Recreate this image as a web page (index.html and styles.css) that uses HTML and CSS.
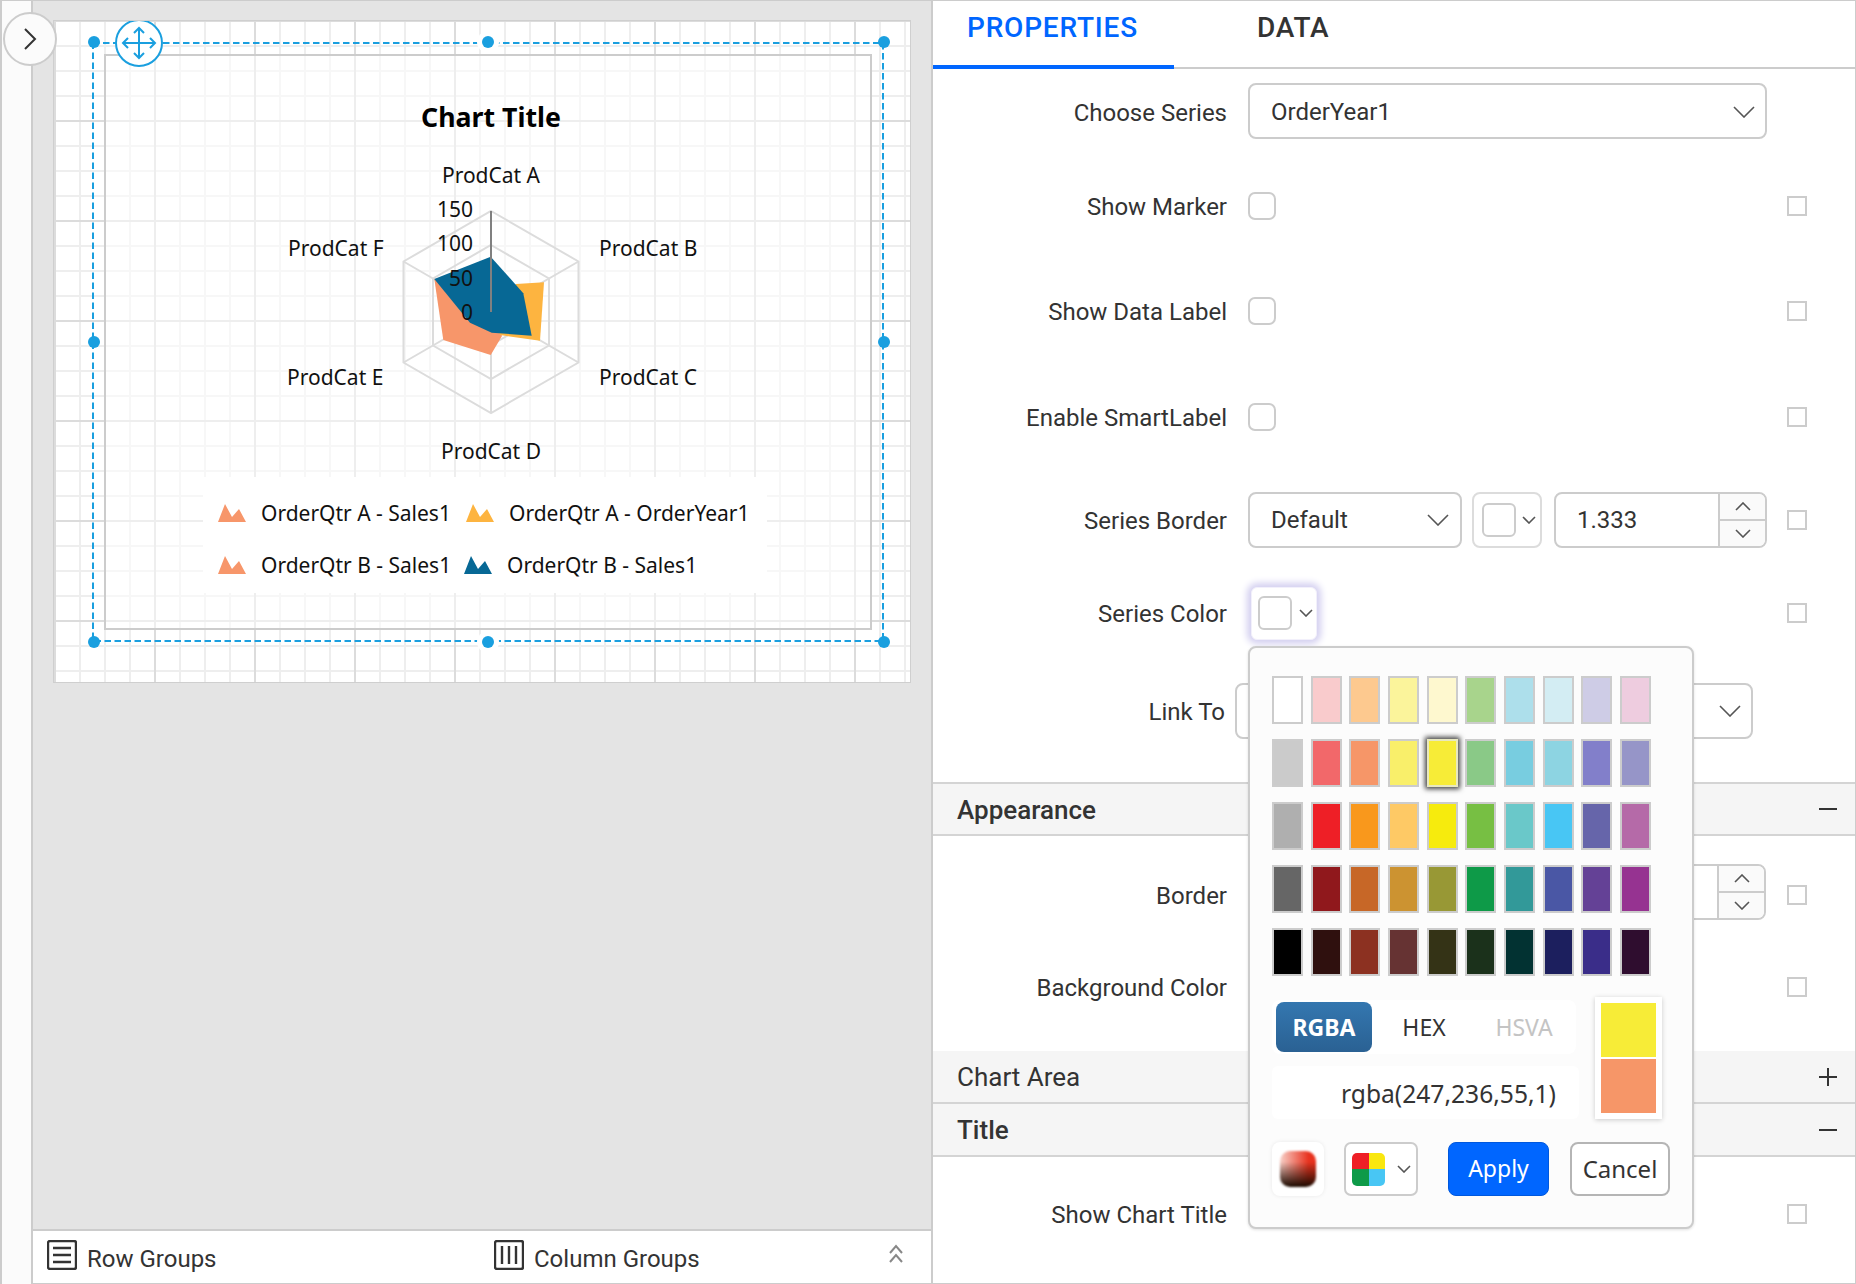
FILE: index.html
```html
<!DOCTYPE html>
<html lang="en">
<head>
<meta charset="utf-8">
<title>Report designer</title>
<link rel="stylesheet" href="styles.css">
</head>
<body>
<div class="app">
  <aside class="rail"></aside>
  <button class="collapse"><svg width="14" height="22" viewBox="0 0 14 22"><polyline points="2,1 12,11 2,21" class="chev-dark"/></svg></button>
  <main class="center">
    <div class="canvas">
      <div class="surface">
        <svg class="chart" viewBox="54 21 856 661" width="856" height="661">
          <rect class="frame" x="105" y="55" width="766" height="574"/>
          <rect class="legend-bg" x="203" y="477" width="564" height="116"/>
          <text class="ct-title" x="491" y="127" text-anchor="middle">Chart Title</text>
          <g class="grid-lines">
            <polygon points="491,211 578.5,261.5 578.5,362.5 491,413 403.5,362.5 403.5,261.5"/>
            <polygon points="491,245 549,278.5 549,345.5 491,379 433,345.5 433,278.5"/>
            <polygon points="491,279 520,295.5 520,328.5 491,345 462,328.5 462,295.5"/>
            <path d="M491 312V413M491 312L578.5 362.5M491 312L403.5 362.5M491 312L578.5 261.5M491 312L403.5 261.5"/>
          </g>
          <polygon class="s-orange" points="434.3,279 443.3,340 490.7,355 502,336 491,312"/>
          <polygon class="s-yellow" points="516,284 544,282.3 540,340.7 500,335 491,312"/>
          <polygon class="s-blue" points="490.7,256.7 523.3,293.3 531.7,335.7 491.7,332.7 470,322.7 434.3,279"/>
          <line class="axis" x1="491" y1="211" x2="491" y2="312"/>
          <g class="ct-label" text-anchor="end">
            <text x="473" y="217">150</text>
            <text x="473" y="251">100</text>
            <text x="473" y="286">50</text>
            <text x="473" y="320">0</text>
          </g>
          <g class="ct-label" text-anchor="middle">
            <text x="491" y="183">ProdCat A</text>
            <text x="491" y="459">ProdCat D</text>
          </g>
          <g class="ct-label">
            <text x="288" y="256">ProdCat F</text>
            <text x="599" y="256">ProdCat B</text>
            <text x="287" y="385">ProdCat E</text>
            <text x="599" y="385">ProdCat C</text>
            <text x="261" y="521">OrderQtr A - Sales1</text>
            <text x="509" y="521">OrderQtr A - OrderYear1</text>
            <text x="261" y="573">OrderQtr B - Sales1</text>
            <text x="507" y="573">OrderQtr B - Sales1</text>
          </g>
          <path class="s-orange" d="M218 522L225 504L232 517L239 509L246 522Z"/>
          <path class="s-yellow" d="M466 522L473 504L480 517L487 509L494 522Z"/>
          <path class="s-orange" d="M218 574L225 556L232 569L239 561L246 574Z"/>
          <path class="s-blue" d="M464 574L471 556L478 569L485 561L492 574Z"/>
          <rect class="sel" x="93" y="43" width="790" height="598"/>
          <circle class="gap-ring" cx="488" cy="42" r="11"/>
          <circle class="gap-ring" cx="488" cy="642" r="11"/>
          <g class="handles">
            <circle cx="94" cy="42" r="6"/><circle cx="488" cy="42" r="6"/><circle cx="884" cy="42" r="6"/>
            <circle cx="94" cy="342" r="6"/><circle cx="884" cy="342" r="6"/>
            <circle cx="94" cy="642" r="6"/><circle cx="488" cy="642" r="6"/><circle cx="884" cy="642" r="6"/>
          </g>
          <circle class="move" cx="139" cy="43" r="23"/>
          <path class="move-arrows" d="M139 28V58M123 43H155M134 33L139 28L144 33M134 53L139 58L144 53M128 38L123 43L128 48M150 38L155 43L150 48"/>
        </svg>
      </div>
    </div>
    <footer class="groups">
      <div class="group group-row">
        <svg width="30" height="30" viewBox="0 0 30 30" class="g-icon"><rect x="1" y="1" width="28" height="28" rx="2"/><path d="M6 8H24M6 15H24M6 22H24"/></svg>
        <span>Row Groups</span>
      </div>
      <div class="group group-col">
        <svg width="30" height="30" viewBox="0 0 30 30" class="g-icon"><rect x="1" y="1" width="28" height="28" rx="2"/><path d="M8 6V24M15 6V24M22 6V24"/></svg>
        <span>Column Groups</span>
      </div>
      <svg class="dbl-up" width="16" height="20" viewBox="0 0 16 20"><path d="M2 9L8 2L14 9M2 18L8 11L14 18"/></svg>
    </footer>
  </main>

  <section class="panel">
    <nav class="tabs">
      <div class="tab tab-active">PROPERTIES</div>
      <div class="tab tab-plain">DATA</div>
    </nav>

    <div class="row r-choose">
      <label class="lbl">Choose Series</label>
      <div class="field f-full"><span>OrderYear1</span><svg class="chv" width="22" height="12" viewBox="0 0 22 12"><polyline points="1,1 11,11 21,1"/></svg></div>
    </div>
    <div class="row r-marker">
      <label class="lbl">Show Marker</label><span class="check"></span><span class="mark"></span>
    </div>
    <div class="row r-dlabel">
      <label class="lbl">Show Data Label</label><span class="check"></span><span class="mark"></span>
    </div>
    <div class="row r-smart">
      <label class="lbl">Enable SmartLabel</label><span class="check"></span><span class="mark"></span>
    </div>
    <div class="row r-border">
      <label class="lbl">Series Border</label>
      <div class="field f-style"><span>Default</span><svg class="chv" width="22" height="12" viewBox="0 0 22 12"><polyline points="1,1 11,11 21,1"/></svg></div>
      <div class="colorbtn"><span class="swatch"></span><svg class="chv" width="14" height="8" viewBox="0 0 14 8"><polyline points="1,1 7,7 13,1"/></svg></div>
      <div class="number"><span class="num-val">1.333</span>
        <div class="spin"><div class="spin-b"><svg class="chv" width="16" height="9" viewBox="0 0 16 9"><polyline points="1,8 8,1 15,8"/></svg></div><div class="spin-b"><svg class="chv" width="16" height="9" viewBox="0 0 16 9"><polyline points="1,1 8,8 15,1"/></svg></div></div>
      </div>
      <span class="mark"></span>
    </div>
    <div class="row r-color">
      <label class="lbl">Series Color</label>
      <div class="colorbtn colorbtn-open"><span class="swatch"></span><svg class="chv" width="14" height="8" viewBox="0 0 14 8"><polyline points="1,1 7,7 13,1"/></svg></div>
      <span class="mark"></span>
    </div>
    <div class="row r-link">
      <label class="lbl lbl-link">Link To</label>
      <div class="field f-link"><svg class="chv" width="22" height="12" viewBox="0 0 22 12"><polyline points="1,1 11,11 21,1"/></svg></div>
    </div>

    <div class="sec"><span class="sec-strong">Appearance</span><svg class="pm" width="18" height="18" viewBox="0 0 18 18"><path d="M0 9H18"/></svg></div>
    <div class="row r-bd">
      <label class="lbl">Border</label>
      <div class="number n-hidden"><div class="spin"><div class="spin-b"><svg class="chv" width="16" height="9" viewBox="0 0 16 9"><polyline points="1,8 8,1 15,8"/></svg></div><div class="spin-b"><svg class="chv" width="16" height="9" viewBox="0 0 16 9"><polyline points="1,1 8,8 15,1"/></svg></div></div></div>
      <span class="mark"></span>
    </div>
    <div class="row r-bg">
      <label class="lbl">Background Color</label><span class="mark"></span>
    </div>
    <div class="sec sec-next"><span>Chart Area</span><svg class="pm" width="18" height="18" viewBox="0 0 18 18"><path d="M0 9H18M9 0V18"/></svg></div>
    <div class="sec sec-next"><span class="sec-strong">Title</span><svg class="pm" width="18" height="18" viewBox="0 0 18 18"><path d="M0 9H18"/></svg></div>
    <div class="row r-title">
      <label class="lbl">Show Chart Title</label><span class="mark"></span>
    </div>
  </section>

  <div class="popup">
    <div class="palette">
      <i class="c c-fff"></i><i class="c c11"></i><i class="c c12"></i><i class="c c13"></i><i class="c c14"></i><i class="c c15"></i><i class="c c16"></i><i class="c c17"></i><i class="c c18"></i><i class="c c19"></i>
      <i class="c c20"></i><i class="c c21"></i><i class="c c22"></i><i class="c c23"></i><i class="c c24"></i><i class="c c25"></i><i class="c c26"></i><i class="c c27"></i><i class="c c28"></i><i class="c c29"></i>
      <i class="c c30"></i><i class="c c31"></i><i class="c c32"></i><i class="c c33"></i><i class="c c34"></i><i class="c c35"></i><i class="c c36"></i><i class="c c37"></i><i class="c c38"></i><i class="c c39"></i>
      <i class="c c40"></i><i class="c c41"></i><i class="c c42"></i><i class="c c43"></i><i class="c c44"></i><i class="c c45"></i><i class="c c46"></i><i class="c c47"></i><i class="c c48"></i><i class="c c49"></i>
      <i class="c c50"></i><i class="c c51"></i><i class="c c52"></i><i class="c c53"></i><i class="c c54"></i><i class="c c55"></i><i class="c c56"></i><i class="c c57"></i><i class="c c58"></i><i class="c c59"></i>
    </div>
    <div class="mid">
      <div class="mid-left">
        <div class="fmt"><span class="fmt-on">RGBA</span><span class="fmt-hex">HEX</span><span class="fmt-off">HSVA</span></div>
        <div class="val">rgba(247,236,55,1)</div>
      </div>
      <div class="preview"><div class="pv-new"></div><div class="pv-old"></div></div>
    </div>
    <div class="actions">
      <div class="grad-btn"><span class="grad"></span></div>
      <div class="pal-btn"><span class="quad"><i class="q1"></i><i class="q2"></i><i class="q3"></i><i class="q4"></i></span><svg class="chv" width="14" height="8" viewBox="0 0 14 8"><polyline points="1,1 7,7 13,1"/></svg></div>
      <button class="apply">Apply</button>
      <button class="cancel">Cancel</button>
    </div>
  </div>
</div>
</body>
</html>
```
FILE: styles.css
```css
* { box-sizing: border-box; }
html, body { margin: 0; padding: 0; }
body { font-family: Roboto, "Liberation Sans", sans-serif; color: #333; background: #fff; }
.app { position: relative; display: flex; width: 1856px; height: 1284px; overflow: hidden; }

.rail { width: 33px; flex: none; background: #fbfbfb; border-left: 2px solid #ccc; border-right: 2px solid #ccc; border-top: 1px solid #ccc; }
.collapse { position: absolute; left: 3px; top: 12px; width: 54px; height: 54px; border-radius: 50%; border: 2px solid #ccc; background: #fbfbfb; display: flex; align-items: center; justify-content: center; padding: 0; z-index: 3; }
.chev-dark { fill: none; stroke: #333; stroke-width: 2; }

.center { width: 898px; flex: none; display: flex; flex-direction: column; }
.canvas { flex: 1; background: #e4e4e4; padding: 20px 20px 0 20px; border-top: 1px solid #ccc; }
.surface {
  width: 858px; height: 663px; margin-top: -1px; border: 1px solid #cfcfcf; background-color: #fff;
  background-image:
    linear-gradient(to right, #dcdcdc 2px, transparent 2px),
    linear-gradient(to bottom, #dcdcdc 2px, transparent 2px),
    linear-gradient(to right, #eeeeee 2px, transparent 2px),
    linear-gradient(to bottom, #eeeeee 2px, transparent 2px);
  background-size: 100px 100%, 100% 100px, 25px 100%, 100% 25px;
  background-position: 0 0, 0 99px, 0 0, 0 24px;
}
.chart { display: block; }
.frame { fill: rgba(255,255,255,.5); stroke: #ccc; stroke-width: 2; }
.legend-bg { fill: #fff; }
.ct-title { font: 700 26.7px "Noto Sans", sans-serif; fill: #000; }
.ct-label { font: 400 21px "Noto Sans", sans-serif; fill: #111; }
.grid-lines { fill: none; stroke: #dcdcdc; stroke-width: 2; }
.s-orange { fill: #f7966a; }
.s-yellow { fill: #fdb440; }
.s-blue { fill: #076895; }
.axis { stroke: #808080; stroke-width: 2; }
.sel { fill: none; stroke: #1a9fdf; stroke-width: 2; stroke-dasharray: 6.5 3.5; }
.gap-ring { fill: #fff; }
.handles { fill: #1a9fdf; }
.move { fill: #fff; stroke: #1a9fdf; stroke-width: 2; }
.move-arrows { fill: none; stroke: #1a9fdf; stroke-width: 2; }

.groups { height: 55px; flex: none; display: flex; align-items: center; background: #fff; border-top: 2px solid #ccc; border-bottom: 1px solid #ccc; font-size: 24px; color: #333; }
.group { display: flex; align-items: center; gap: 10px; }
.group span { margin-top: 4px; }
.group-row { margin-left: 14px; width: 447px; }
.group-col { width: 394px; }
.g-icon { fill: none; stroke: #333; stroke-width: 2.4; margin-top: -4px; }
.dbl-up { fill: none; stroke: #888; stroke-width: 2; margin-top: -6px; }

.panel { width: 925px; flex: none; border-left: 2px solid #ccc; border-right: 1px solid #ccc; border-top: 1px solid #ccc; border-bottom: 1px solid #ccc; display: flex; flex-direction: column; }
.tabs { height: 68px; flex: none; display: flex; border-bottom: 2px solid #ccc; }
.tab { font-size: 28px; font-weight: 500; line-height: 54px; letter-spacing: .8px; }
.tab-active { width: 241px; height: 68px; padding-left: 34px; color: #0066ff; border-bottom: 4px solid #0066ff; }
.tab-plain { margin-left: 83px; color: #333; }

.row { display: flex; align-items: center; flex: none; font-size: 24px; }
.lbl { width: 294px; text-align: right; margin-right: 21px; padding-top: 2px; flex: none; color: #333; }
.r-choose { height: 86px; }
.r-marker { height: 102px; }
.r-dlabel { height: 108px; }
.r-smart { height: 103px; }
.r-border { height: 104px; }
.r-color { height: 82px; }
.r-link { height: 128px; padding-bottom: 14px; }
.r-bd { height: 118px; }
.r-bg { height: 97px; padding-bottom: 31px; }
.r-title { height: 114px; }

.field { height: 56px; margin-top: -1px; border: 2px solid #ccc; border-radius: 8px; display: flex; align-items: center; justify-content: space-between; padding: 0 10px 0 21px; background: #fff; font-size: 24px; flex: none; }
.f-full { width: 519px; margin-top: -3px; padding-top: 2px; }
.f-style { width: 214px; padding-right: 11px; }
.f-link { width: 518px; margin-left: -11px; justify-content: flex-end; }
.lbl-link { width: 292px; }
.chv { fill: none; stroke: #555; stroke-width: 1.6; flex: none; }
.check { width: 28px; height: 28px; border: 2px solid #ccc; border-radius: 7px; flex: none; background: #fff; }
.mark { width: 20px; height: 20px; border: 2px solid #ccc; margin-left: auto; margin-right: 48px; flex: none; background: #fff; }
.colorbtn { height: 56px; margin-top: -1px; width: 70px; margin-left: 10px; border: 2px solid #dcdcdc; border-radius: 8px; display: flex; align-items: center; gap: 6px; padding-left: 8px; flex: none; }
.colorbtn-open { margin-left: 3px; margin-top: 0; width: 66px; height: 53px; border: 1px solid #f2f0fb; border-radius: 6px; box-shadow: 0 0 7px 4px #d3cff0; padding-left: 6px; gap: 7px; background: #fff; }
.swatch { width: 34px; height: 34px; border: 2px solid #ccc; border-radius: 6px; flex: none; background: #fff; }
.number { height: 56px; margin-top: -1px; width: 213px; margin-left: 12px; border: 2px solid #ccc; border-radius: 8px; display: flex; align-items: stretch; flex: none; overflow: hidden; }
.num-val { align-self: center; padding-left: 21px; font-size: 24px; }
.spin { width: 47px; margin-left: auto; border-left: 2px solid #ccc; display: flex; flex-direction: column; background: #fafafa; }
.spin-b { flex: 1; display: flex; align-items: center; justify-content: center; }
.spin-b + .spin-b { border-top: 2px solid #ccc; }
.n-hidden { margin-left: auto; margin-top: -6px; }
.n-hidden + .mark { margin-left: 21px; }

.sec { height: 54px; flex: none; display: flex; align-items: center; justify-content: space-between; padding: 0 18px 0 24px; background: #f5f5f5; border-top: 2px solid #d4d4d4; border-bottom: 2px solid #d4d4d4; font-size: 26px; color: #333; }
.sec span { margin-top: 1px; }
.sec-next { height: 53px; border-top: 0; }
.sec-strong { font-weight: 500; }
.pm { fill: none; stroke: #333; stroke-width: 2; }

.popup { position: absolute; left: 1248px; top: 646px; width: 446px; height: 583px; padding: 28px 22px 0 22px; background: #fcfcfc; border: 2px solid #ccc; border-radius: 8px; box-shadow: 0 1px 3px rgba(0,0,0,.12); z-index: 4; font-family: "Noto Sans", sans-serif; }
.palette { display: grid; grid-template-columns: repeat(10, 31px); grid-auto-rows: 48px; column-gap: 7.67px; row-gap: 15px; }
.c { display: block; border: 2px solid #ccc; }
.c-fff { background: #fff; } .c11 { background: #f9cbcc; } .c12 { background: #fdc98f; } .c13 { background: #fbf49b; } .c14 { background: #fef8cf; } .c15 { background: #a8d48c; } .c16 { background: #addfeb; } .c17 { background: #d3edf3; } .c18 { background: #cecce6; } .c19 { background: #eeccdf; }
.c20 { background: #cbcbcb; } .c21 { background: #f2686a; } .c22 { background: #f69668; } .c23 { background: #f9ef6a; } .c24 { background: #f7ec37; border-color: #e8e8c0; box-shadow: 0 0 5px 2px rgba(0,0,0,.75); } .c25 { background: #8ac987; } .c26 { background: #78cde0; } .c27 { background: #8dd4e2; } .c28 { background: #827fca; } .c29 { background: #9695c8; }
.c30 { background: #afafaf; } .c31 { background: #ee1f26; } .c32 { background: #f9981c; } .c33 { background: #fec965; } .c34 { background: #f6eb0d; } .c35 { background: #77bf43; } .c36 { background: #6ac8c9; } .c37 { background: #48c6f4; } .c38 { background: #6665aa; } .c39 { background: #b56aa8; }
.c40 { background: #666; } .c41 { background: #90181c; } .c42 { background: #c76727; } .c43 { background: #cc9331; } .c44 { background: #989835; } .c45 { background: #0e9a48; } .c46 { background: #329999; } .c47 { background: #4a57a5; } .c48 { background: #644196; } .c49 { background: #963391; }
.c50 { background: #000; } .c51 { background: #2f100e; } .c52 { background: #8c3121; } .c53 { background: #663333; } .c54 { background: #343316; } .c55 { background: #1b311b; } .c56 { background: #023232; } .c57 { background: #1c1f5e; } .c58 { background: #3a2d89; } .c59 { background: #2f0d2f; }

.mid { display: flex; margin-top: 21px; }
.mid-left { width: 323px; flex: none; padding-top: 3px; }
.fmt { width: 304px; height: 54px; background: #fff; border-radius: 8px; padding: 2px 4px; display: flex; align-items: center; font-size: 23px; }
.fmt-on { width: 96px; height: 50px; border-radius: 8px; background: linear-gradient(#3477b0, #2a6193); color: #fff; font-weight: 700; display: flex; align-items: center; justify-content: center; flex: none; }
.fmt-hex { width: 104px; text-align: center; color: #333; flex: none; }
.fmt-off { width: 96px; text-align: center; color: #c4c4c4; flex: none; }
.val { width: 307px; height: 53px; margin-top: 12px; background: #fff; border-radius: 6px; font-size: 24.6px; line-height: 55px; text-align: right; padding-right: 23px; color: #333; }
.preview { width: 67px; height: 122px; padding: 6px; background: #fff; box-shadow: 0 1px 5px rgba(0,0,0,.2); display: flex; flex-direction: column; gap: 2px; flex: none; }
.pv-new { flex: 1; background: #f7ec37; }
.pv-old { flex: 1; background: #f69668; }

.actions { display: flex; align-items: stretch; height: 54px; margin-top: 23px; }
.grad-btn { width: 52px; background: #fff; border-radius: 8px; box-shadow: 0 0 4px rgba(0,0,0,.08); display: flex; align-items: center; justify-content: center; flex: none; }
.grad { width: 36px; height: 36px; border-radius: 10px; filter: blur(1px); background: linear-gradient(to bottom, rgba(0,0,0,0) 30%, #1a0a00 100%), linear-gradient(to right, #f7d0c8 0, #e8321e 80%); }
.pal-btn { width: 74px; margin-left: 20px; border: 2px solid #ccc; border-radius: 7px; background: #fff; display: flex; align-items: center; padding-left: 6px; gap: 12px; flex: none; }
.quad { width: 33px; height: 33px; border-radius: 5px; overflow: hidden; display: grid; grid-template-columns: 1fr 1fr; grid-template-rows: 1fr 1fr; flex: none; }
.quad i { display: block; }
.q1 { background: #ee1f26; } .q2 { background: #f9e70f; } .q3 { background: #0e9a48; } .q4 { background: #48c6f4; }
.apply, .cancel { font: 400 23px "Noto Sans", sans-serif; border-radius: 8px; padding: 0 0 2px; flex: none; }
.apply { width: 101px; margin-left: 30px; color: #fff; background: #0066ff; border: 1px solid #0058dd; }
.cancel { width: 100px; margin-left: 21px; color: #333; background: #fff; border: 2px solid #b5b5b5; font-size: 24px; }
```
